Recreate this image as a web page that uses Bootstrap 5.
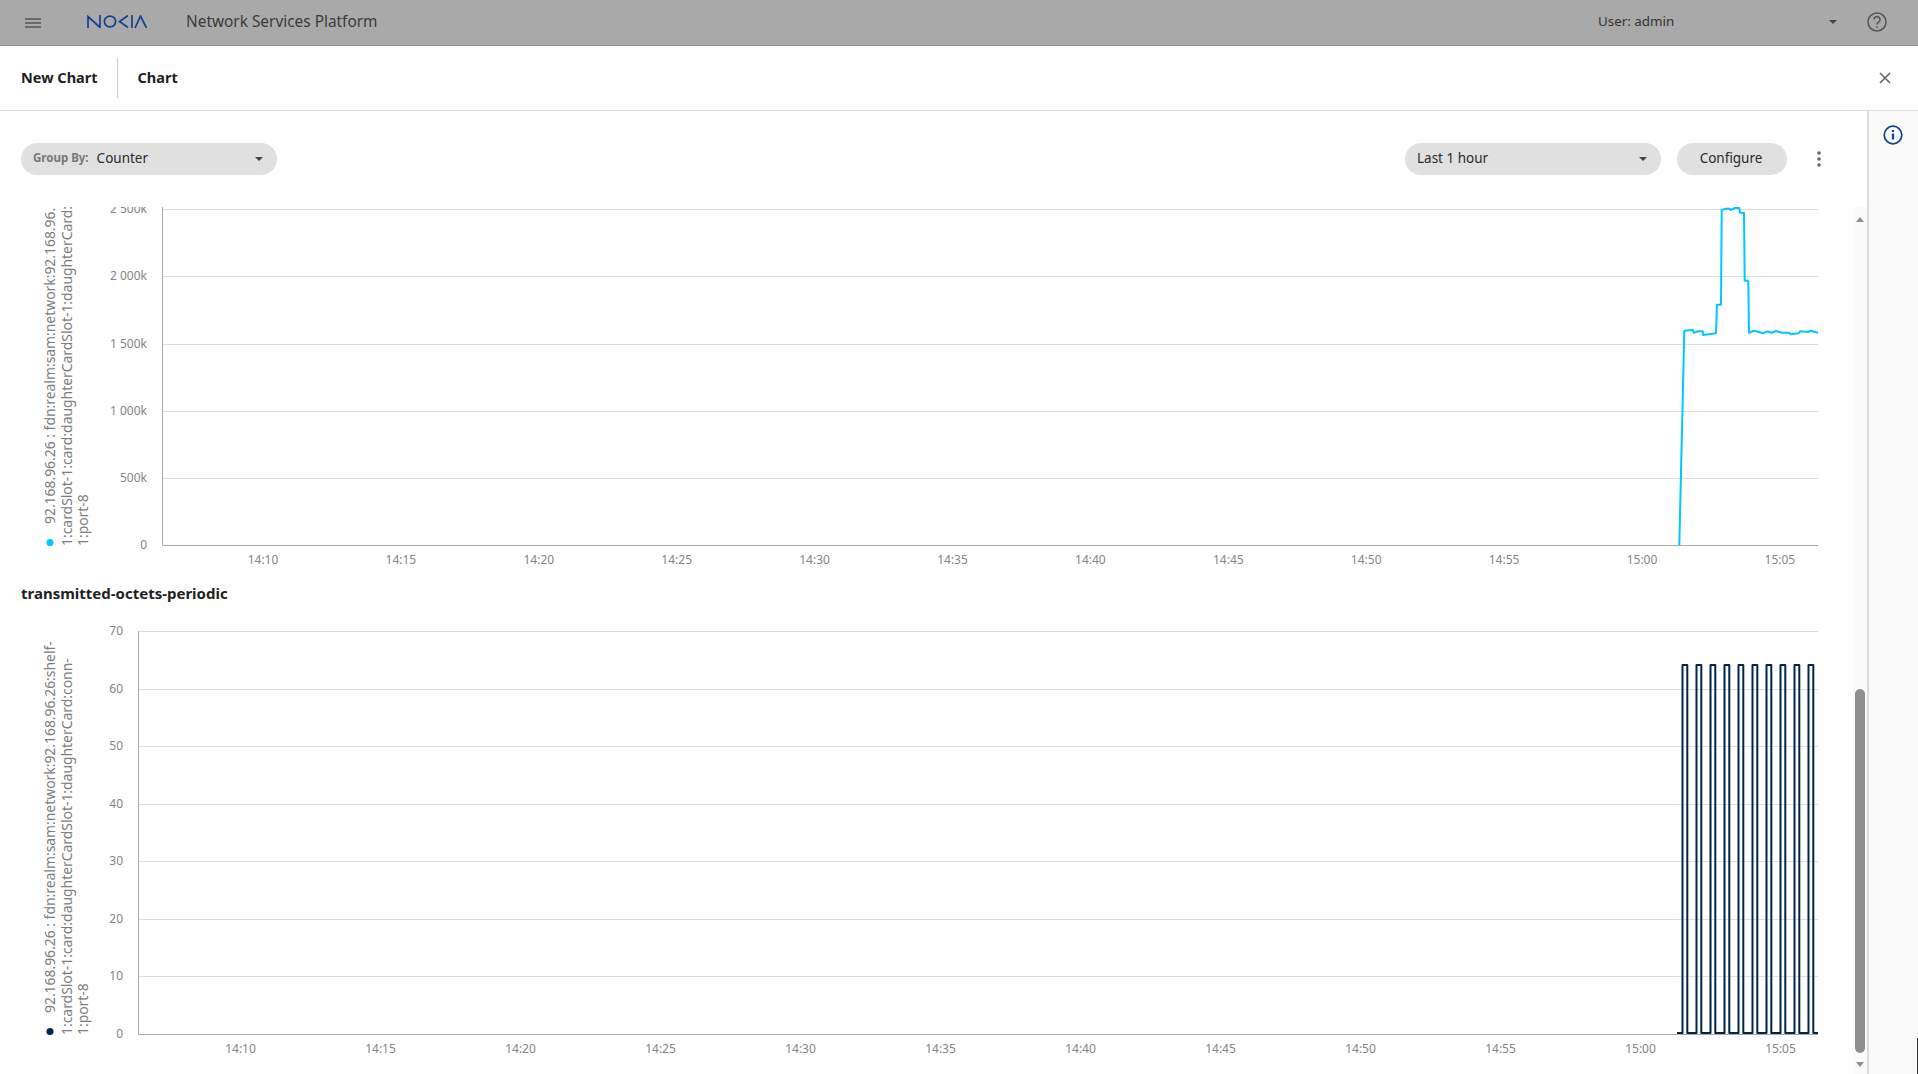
<!DOCTYPE html>
<html>
<head>
  <meta charset="UTF-8">
  <title>Network Services Platform</title>
  <link rel="stylesheet" href="https://cdn.jsdelivr.net/npm/bootstrap@5.3.0/dist/css/bootstrap.min.css">
  <style>
    html, body { height: 100%; }
    body { font-family: "Noto Sans", "Liberation Sans", sans-serif; font-size: 14px; color: #222; overflow: hidden; background: #fff; position: relative; }
    .top-strip { height: 46px; flex: none; background: #a9a9a9; border-bottom: 1px solid #8e8e8e; color: #333; }
    .menu-btn { width: 16px; margin-left: 25px; }
    .nokia-logo { margin-left: 46px; margin-bottom: 2px; }
    .app-title { margin-left: 39px; margin-bottom: 2px; font-size: 15.4px; color: #3a3a3a; }
    .user-box { width: 239px; margin-right: 30px; font-size: 13.400px; color: #333; margin-bottom: 3px; }
    .help-icon { margin-right: 31px; margin-bottom: 1px; }
    .tab-strip { height: 65px; flex: none; border-bottom: 1px solid #dedede; padding-left: 21px; }
    .tab-title { font-size: 14.5px; font-weight: 700; color: #1f1f1f; margin-bottom: 1px; }
    .tab-sep { width: 1px; height: 40px; background: #cfcfcf; margin: 0 20px 0 19px; }
    .close-btn { margin-right: 27px; }
    .tool-strip { height: 96px; flex: none; padding-left: 21px; }
    .pill-box { height: 32px; border-radius: 16px; background: #e0e0e0; padding: 0 14px 2px 12px; font-size: 13.5px; color: #2a2a2a; }
    .pill-group { width: 256px; }
    .pill-range { width: 256px; margin-left: auto; }
    .pill-conf { width: 110px; margin-left: 16px; }
    .pill-tag { font-size: 11.5px; font-weight: 700; color: #777; margin-right: 8px; }
    .caret-down { width: 0; height: 0; border-left: 4px solid transparent; border-right: 4px solid transparent; border-top: 4px solid #444; margin-left: auto; margin-top: 2px; }
    .kebab-btn { width: 4px; margin: 0 46px 0 30px; }
    .side-panel { width: 51px; flex: none; background: #fafafa; border-left: 2px solid #dcdcdc; padding-top: 14px; padding-right: 1px; }
    .chart-zone { min-width: 0; overflow: hidden; }
    .chart-row { height: 358px; }
    .chart-row.lower { height: 454px; }
    .legend-col { width: 92px; flex: none; padding: 0 0 19px 42px; }
    .chart-row.lower .legend-col { padding: 20px 0 39px 42px; }
    .legend-text { height: 100%; writing-mode: vertical-rl; transform: rotate(180deg); overflow: hidden; font-size: 13.9px; line-height: 16.5px; color: #7d7d7d; white-space: nowrap; }
    .legend-text span { display: block; }
    .legend-dot { display: inline-block; width: 7px; height: 7px; border-radius: 50%; margin-bottom: 15px; }
    .chart-head { height: 55px; padding: 2px 0 0 21px; font-size: 15px; font-weight: 700; color: #1f1f1f; }
    .scroll-rail { width: 14px; flex: none; background: #fafafa; position: relative; }
    .scroll-knob { position: absolute; left: 2px; right: 2px; top: 482px; height: 364px; border-radius: 5px; background: #8f8f8f; }
    .rail-up, .rail-down { position: absolute; left: 3px; width: 0; height: 0; border-left: 4px solid transparent; border-right: 4px solid transparent; }
    .rail-up { top: 10px; border-bottom: 5px solid #8f8f8f; }
    .rail-down { bottom: 7px; border-top: 5px solid #8f8f8f; }
    .corner-line { position: absolute; right: 0; bottom: 0; width: 1px; height: 36px; background: #333; }
    svg text { font-family: "Noto Sans", "Liberation Sans", sans-serif; font-size: 12px; fill: #858585; }
  </style>
</head>
<body class="d-flex flex-column">

<!-- top bar -->
<header class="top-strip d-flex align-items-center">
  <svg class="menu-btn" width="16" height="10" viewBox="0 0 16 10"><path d="M0 1h16M0 5h16M0 9h16" stroke="#555" stroke-width="1.5"/></svg>
  <svg class="nokia-logo" width="60" height="13" viewBox="0 0 60 13" fill="none" stroke="#124191" stroke-width="1.7">
    <path d="M1 13V1.5L13 12.5V0"/>
    <ellipse cx="23" cy="6.5" rx="5.6" ry="5.4"/>
    <path d="M41 .5L32.5 6.5L41 12.5"/>
    <path d="M45 0V13"/>
    <path d="M48 13L53.5 1L59.500 13"/>
  </svg>
  <span class="app-title">Network Services Platform</span>
  <div class="user-box d-flex align-items-center ms-auto">User: admin<span class="caret-down"></span></div>
  <svg class="help-icon" width="20" height="20" viewBox="0 0 20 20" fill="none" stroke="#555" stroke-width="1.5">
    <circle cx="10" cy="10" r="9"/>
    <path d="M7 7.600a3 3 0 1 1 4.500 2.600c-1 .6-1.500 1.100-1.500 2.400"/>
    <path d="M10 14.200v1.600"/>
  </svg>
</header>

<!-- tabs -->
<div class="tab-strip d-flex align-items-center">
  <span class="tab-title">New Chart</span>
  <span class="tab-sep"></span>
  <span class="tab-title">Chart</span>
  <svg class="close-btn ms-auto" width="12" height="12" viewBox="0 0 12 12"><path d="M1 1l10 10M11 1L1 11" stroke="#666" stroke-width="1.6"/></svg>
</div>

<div class="d-flex flex-grow-1" style="min-height:0">
  <div class="flex-grow-1 d-flex flex-column" style="min-width:0">
    <!-- toolbar -->
    <div class="tool-strip d-flex align-items-center">
      <div class="pill-box pill-group d-flex align-items-center"><span class="pill-tag">Group By:</span>Counter<span class="caret-down"></span></div>
      <div class="pill-box pill-range d-flex align-items-center">Last 1 hour<span class="caret-down"></span></div>
      <div class="pill-box pill-conf d-flex align-items-center justify-content-center">Configure</div>
      <svg class="kebab-btn" width="4" height="16" viewBox="0 0 4 16"><circle cx="2" cy="2" r="1.800" fill="#666"/><circle cx="2" cy="8" r="1.800" fill="#666"/><circle cx="2" cy="14" r="1.800" fill="#666"/></svg>
    </div>

    <div class="d-flex flex-grow-1" style="min-height:0">
      <div class="chart-zone flex-grow-1">
        <div class="chart-row d-flex">
          <div class="legend-col">
            <div class="legend-text">
              <span><i class="legend-dot" style="background:#00c8ff"></i>92.168.96.26 : fdn:realm:sam:network:92.168.96.26:shelf-</span>
              <span>1:cardSlot-1:card:daughterCardSlot-1:daughterCard:conn-</span>
              <span>1:port-8</span>
            </div>
          </div>
          <svg id="chartOne" width="1728" height="358" viewBox="92 207 1728 358"></svg>
        </div>
        <div class="chart-head d-flex align-items-center">transmitted-octets-periodic</div>
        <div class="chart-row lower d-flex">
          <div class="legend-col">
            <div class="legend-text">
              <span><i class="legend-dot" style="background:#00264d"></i>92.168.96.26 : fdn:realm:sam:network:92.168.96.26:shelf-</span>
              <span>1:cardSlot-1:card:daughterCardSlot-1:daughterCard:conn-</span>
              <span>1:port-8</span>
            </div>
          </div>
          <svg id="chartTwo" width="1728" height="454" viewBox="92 620 1728 454"></svg>
        </div>
      </div>
      <div class="scroll-rail"><span class="rail-up"></span><span class="scroll-knob"></span><span class="rail-down"></span></div>
    </div>
  </div>

  <!-- right panel -->
  <aside class="side-panel d-flex justify-content-center">
    <svg width="20" height="20" viewBox="0 0 20 20" fill="none" stroke="#124191">
      <circle cx="10" cy="10" r="8.800" stroke-width="1.700"/>
      <path d="M10 8.500v6" stroke-width="2.200"/>
      <path d="M10 5v2" stroke-width="2.200"/>
    </svg>
  </aside>
</div>
<span class="corner-line"></span>

<script>
  const minutes = ["14:10","14:15","14:20","14:25","14:30","14:35","14:40","14:45","14:50","14:55","15:00","15:05"];

  function drawChart(id, c) {
    let s = "";
    c.grid.forEach(g => {
      if (g[0] !== c.base) s += `<path d="M${c.left} ${g[0] + .5}H1818" stroke="#dedede"/>`;
      s += `<text x="${c.left - 15}" y="${g[0] + 4}" text-anchor="end">${g[1]}</text>`;
    });
    s += `<path d="M${c.left + .5} ${c.top}V${c.base + .5}H1818" stroke="#aaa" fill="none"/>`;
    minutes.forEach((m, i) => {
      s += `<text x="${c.first + i * c.step}" y="${c.base + 19}" text-anchor="middle">${m}</text>`;
    });
    s += `<path d="${c.line}" fill="none" stroke="${c.color}" stroke-width="2" stroke-linejoin="round"/>`;
    document.getElementById(id).innerHTML = s;
  }

  // traffic trace, read off as pixels: x from 1640, y from 190, both times 3
  const trace = [[118,1066],[133,422],[158,420],[162,428],[175,424],[188,424],[190,435],[228,430],[231,344],[243,344],[245,60],[258,56],[270,56],[272,60],[285,54],[298,54],[300,68],[312,68],[314,272],[325,272],[327,428],[342,422],[355,425],[368,430],[382,424],[395,428],[408,423],[425,428],[448,428],[452,433],[476,430],[480,424],[505,426],[512,422],[534,428]];
  const traceLine = "M" + trace.map(p => (1640 + p[0] / 3).toFixed(1) + " " + (190 + p[1] / 3).toFixed(1)).join("L");

  let pulses = "M1677 1033H1682.500";
  for (let i = 0; i < 10; i++) {
    const x = 1682.5 + i * 14;
    pulses += `V665H${x + 4.800}V1033H${i < 9 ? x + 14 : 1818}`;
  }

  drawChart("chartOne", {
    left: 162, top: 207, base: 545, first: 263, step: 137.9, color: "#00c8ff", line: traceLine,
    grid: [[209,"2 500k"],[276,"2 000k"],[344,"1 500k"],[411,"1 000k"],[478,"500k"],[545,"0"]]
  });
  drawChart("chartTwo", {
    left: 138, top: 631, base: 1034, first: 240.500, step: 140, color: "#00264d", line: pulses,
    grid: [[631,"70"],[689,"60"],[746,"50"],[804,"40"],[861,"30"],[919,"20"],[976,"10"],[1034,"0"]]
  });
</script>
<script src="https://cdn.jsdelivr.net/npm/bootstrap@5.3.0/dist/js/bootstrap.bundle.min.js"></script>
</body>
</html>
